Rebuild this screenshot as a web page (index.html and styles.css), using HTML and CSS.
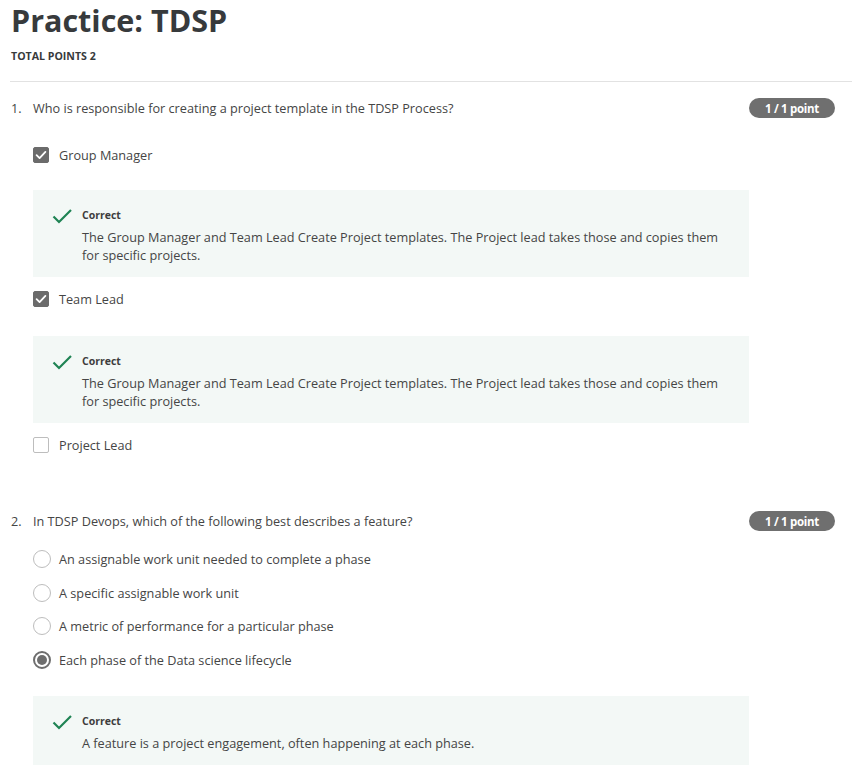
FILE: index.html
```html
<!DOCTYPE html>
<html>
<head>
<meta charset="utf-8">
<link rel="stylesheet" href="styles.css">
</head>
<body>
<div class="page">
  <header class="header">
    <h1 class="title">Practice: TDSP</h1>
    <p class="total">TOTAL POINTS 2</p>
  </header>
  <div class="rule"></div>

  <section class="question q1">
    <div class="q-row">
      <span class="q-num">1.</span>
      <span class="q-text">Who is responsible for creating a project template in the TDSP Process?</span>
      <span class="badge">1 / 1 point</span>
    </div>
    <div class="options">
      <div class="option first">
        <span class="checkbox checked"><svg width="16" height="16" viewBox="0 0 16 16"><path d="M3.6 8.2 L6.6 11.1 L12.4 4.9" fill="none" stroke="#fff" stroke-width="1.8" stroke-linecap="round" stroke-linejoin="round"/></svg></span>
        <span class="label">Group Manager</span>
      </div>
      <div class="feedback">
        <svg class="tick" width="20" height="20" viewBox="0 0 20 20"><path d="M1.5 10.5 L7 16 L19 4" fill="none" stroke="#1f8354" stroke-width="2.2"/></svg>
        <div class="fb-body">
          <div class="fb-title">Correct</div>
          <div class="fb-text">The Group Manager and Team Lead Create Project templates. The Project lead takes those and copies them for specific projects.</div>
        </div>
      </div>
      <div class="option after-fb">
        <span class="checkbox checked"><svg width="16" height="16" viewBox="0 0 16 16"><path d="M3.6 8.2 L6.6 11.1 L12.4 4.9" fill="none" stroke="#fff" stroke-width="1.8" stroke-linecap="round" stroke-linejoin="round"/></svg></span>
        <span class="label">Team Lead</span>
      </div>
      <div class="feedback second">
        <svg class="tick" width="20" height="20" viewBox="0 0 20 20"><path d="M1.5 10.5 L7 16 L19 4" fill="none" stroke="#1f8354" stroke-width="2.2"/></svg>
        <div class="fb-body">
          <div class="fb-title">Correct</div>
          <div class="fb-text">The Group Manager and Team Lead Create Project templates. The Project lead takes those and copies them for specific projects.</div>
        </div>
      </div>
      <div class="option after-fb">
        <span class="checkbox"></span>
        <span class="label">Project Lead</span>
      </div>
    </div>
  </section>

  <section class="question q2">
    <div class="q-row">
      <span class="q-num">2.</span>
      <span class="q-text">In TDSP Devops, which of the following best describes a feature?</span>
      <span class="badge">1 / 1 point</span>
    </div>
    <div class="options radios">
      <div class="option"><span class="radio"></span><span class="label">An assignable work unit needed to complete a phase</span></div>
      <div class="option"><span class="radio"></span><span class="label">A specific assignable work unit</span></div>
      <div class="option"><span class="radio"></span><span class="label">A metric of performance for a particular phase</span></div>
      <div class="option"><span class="radio selected"></span><span class="label">Each phase of the Data science lifecycle</span></div>
      <div class="feedback">
        <svg class="tick" width="20" height="20" viewBox="0 0 20 20"><path d="M1.5 10.5 L7 16 L19 4" fill="none" stroke="#1f8354" stroke-width="2.2"/></svg>
        <div class="fb-body">
          <div class="fb-title">Correct</div>
          <div class="fb-text">A feature is a project engagement, often happening at each phase.</div>
        </div>
      </div>
    </div>
  </section>
</div>
</body>
</html>
```
FILE: styles.css
```css
* { box-sizing: border-box; }
html, body { margin: 0; padding: 0; background: #fff; }
body {
  font-family: "Open Sans", "Noto Sans", sans-serif;
  color: #454545;
  font-size: 12.7px;
}
.page { padding: 0 4px 0 10px; }
.header { padding-left: 1px; }
.title {
  margin: 0;
  font-size: 30.5px;
  line-height: 40px;
  font-weight: 700;
  color: #373a3c;
}
.total {
  margin: 8px 0 0;
  font-size: 10.6px;
  line-height: 16px;
  font-weight: 700;
  color: #373a3c;
}
.rule {
  margin-top: 17px;
  height: 1px;
  background: #e2e2e2;
}
.question { padding-right: 17px; }
.q1 { margin-top: 16px; }
.q2 { margin-top: 56px; }
.q-row {
  display: flex;
  align-items: center;
  height: 20px;
}
.q-num { width: 23px; padding-left: 1px; }
.q-text { flex: 1; }
.badge {
  width: 86px;
  height: 20px;
  border-radius: 10px;
  background: #6f6f6f;
  color: #fff;
  font-size: 11.5px;
  font-weight: 700;
  display: flex;
  align-items: center;
  justify-content: center;
  letter-spacing: -0.3px;
}
.options {
  padding-left: 23px;
  width: 739px;
}
.option {
  display: flex;
  align-items: center;
  height: 20px;
  margin-top: 13.5px;
}
.option.first { margin-top: 27px; }
.option.after-fb { margin-top: 12px; }
.radios .option:first-child { margin-top: 18px; }
.label { margin-left: 10px; }
.radios .label { margin-left: 8px; }
.checkbox {
  width: 16px;
  height: 16px;
  border: 1px solid #bdbdbd;
  border-radius: 2px;
  display: flex;
  align-items: center;
  justify-content: center;
  flex: none;
}
.checkbox.checked {
  background: #6b6b6b;
  border-color: #6b6b6b;
}
.checkbox svg { display: block; flex: none; }
.radio {
  width: 18px;
  height: 18px;
  border: 1px solid #bdbdbd;
  border-radius: 50%;
  flex: none;
  display: flex;
  align-items: center;
  justify-content: center;
}
.radio.selected {
  border: 2px solid #6e6e6e;
}
.radio.selected::after {
  content: "";
  width: 10px;
  height: 10px;
  border-radius: 50%;
  background: #6e6e6e;
}
.feedback {
  margin-top: 25px;
  background: #f3f8f6;
  display: flex;
  align-items: flex-start;
  padding: 17px 26px 13px 19px;
}
.feedback.second { margin-top: 27px; }
.radios .feedback { margin-top: 26px; }
.tick { flex: none; margin-top: -1px; }
.fb-body { margin-left: 10px; }
.fb-title {
  font-size: 10.5px;
  font-weight: 700;
  line-height: 16px;
  color: #3d3d3d;
}
.fb-text {
  margin-top: 5px;
  line-height: 18px;
}
```
